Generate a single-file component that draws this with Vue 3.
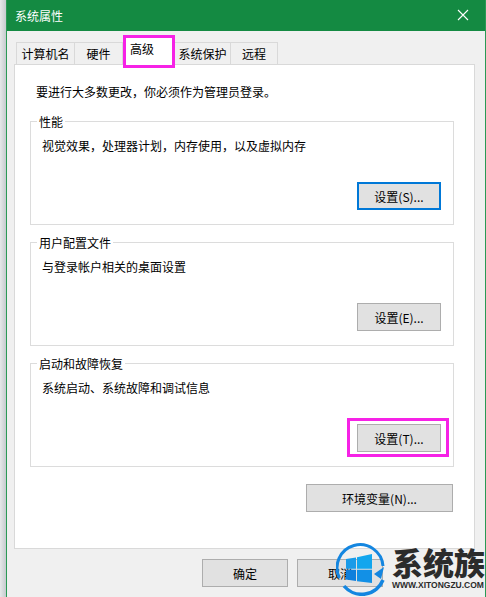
<template>
  <div class="desktop">
    <div class="shadow"></div>
    <div class="window">
      <div class="titlebar">
        <span>系统属性</span>
        <svg class="close" width="12" height="12" viewBox="0 0 12 12">
          <path d="M1 1 L11 11 M11 1 L1 11" stroke="#fff" stroke-width="1.1" fill="none" />
        </svg>
      </div>

      <div class="dialog">
        <div class="tabs">
          <div
            v-for="tab in tabs"
            :key="tab.name"
            class="tab"
            :class="{ active: tab.name === '高级' }"
            :style="{ width: tab.width + 'px' }"
          >
            {{ tab.name }}
          </div>
        </div>

        <div class="panel">
          <p class="notice">要进行大多数更改，你必须作为管理员登录。</p>

          <div v-for="group in groups" :key="group.title" class="group">
            <span class="legend">{{ group.title }}</span>
            <p class="desc">{{ group.desc }}</p>
            <div class="group-foot">
              <button class="btn" :class="{ focused: group.focused, marked: group.marked }">
                {{ group.button }}
                <span v-if="group.marked" class="mark"></span>
              </button>
            </div>
          </div>

          <div class="env-row">
            <button class="btn env">环境变量(N)...</button>
          </div>
        </div>

        <div class="footer">
          <button class="btn wide">确定</button>
          <button class="btn wide">取消</button>
        </div>
      </div>
    </div>

    <div class="watermark">
      <svg class="logo" width="52" height="54" viewBox="0 0 52 54">
        <path d="M3.5 36 A23 23 0 1 1 47 24" fill="none" stroke="#1486e0" stroke-width="3" />
        <path d="M47 38 A23 23 0 0 1 8 44" fill="none" stroke="#1486e0" stroke-width="3.5" />
        <path d="M38 32 L48 25 L45 37 Z" fill="#1486e0" />
        <path d="M10 17 L20 15.5 L20 26.8 L10 26.8 Z" fill="#1a9be8" />
        <path d="M21 15.2 L36 12 L36 26.8 L21 26.8 Z" fill="#12a6ee" />
        <path d="M10 27.8 L20 27.8 L20 39 L10 37.5 Z" fill="#0f7fdc" />
        <path d="M21 27.8 L36 27.8 L36 41 L21 39.2 Z" fill="#1290e6" />
      </svg>
      <div class="brand">
        <div class="brand-name">系统族</div>
        <div class="brand-url">WWW.XITONGZU.COM</div>
      </div>
    </div>
  </div>
</template>

<script setup>
const tabs = [
  { name: "计算机名", width: 59 },
  { name: "硬件", width: 48 },
  { name: "高级", width: 52 },
  { name: "系统保护", width: 56 },
  { name: "远程", width: 47 }
];

const groups = [
  {
    title: "性能",
    desc: "视觉效果，处理器计划，内存使用，以及虚拟内存",
    button: "设置(S)...",
    focused: true
  },
  {
    title: "用户配置文件",
    desc: "与登录帐户相关的桌面设置",
    button: "设置(E)..."
  },
  {
    title: "启动和故障恢复",
    desc: "系统启动、系统故障和调试信息",
    button: "设置(T)...",
    marked: true
  }
];
</script>

<style>
html,
body {
  margin: 0;
  overflow: hidden;
}
</style>

<style scoped>
.desktop {
  position: relative;
  display: flex;
  width: 486px;
  height: 597px;
  overflow: hidden;
  background: #fff;
  font-family: "Noto Sans CJK SC", "Liberation Sans", sans-serif;
  font-size: 12px;
  color: #000;
}
.shadow {
  width: 6px;
  background: linear-gradient(to right, #e6e8e9, #c5cbce);
}
.window {
  flex: 1;
  display: flex;
  flex-direction: column;
  border-left: 1px solid #2a9a55;
  border-right: 1px solid #2a9a55;
  background: #f0f0f0;
}
.titlebar {
  height: 31px;
  flex: none;
  display: flex;
  align-items: center;
  justify-content: space-between;
  padding: 0 16px 1px 8px;
  box-sizing: border-box;
  background: #148a42;
  color: #fff;
}
.close {
  display: block;
}
.dialog {
  flex: 1;
  padding: 4px 10px 0 7px;
  display: flex;
  flex-direction: column;
}
.tabs {
  display: flex;
  align-items: flex-end;
  height: 29px;
  padding-left: 2px;
}
.tab {
  position: relative;
  height: 22px;
  box-sizing: border-box;
  border: 1px solid #d9d9d9;
  border-bottom: none;
  border-left: none;
  background: #f0f0f0;
  text-align: center;
  line-height: 21px;
}
.tab:first-child {
  border-left: 1px solid #d9d9d9;
}
.tab.active {
  z-index: 2;
  height: 33px;
  margin-bottom: -4px;
  border: 3px solid #f622e6;
  background: #fff;
  line-height: 22px;
  text-align: left;
  padding-left: 4px;
}
.panel {
  height: 485px;
  box-sizing: border-box;
  border: 1px solid #d9d9d9;
  background: #fff;
  padding: 18px 20px 0 15px;
}
.notice {
  margin: 0 0 20px 6px;
  height: 18px;
  line-height: 18px;
}
.group {
  position: relative;
  height: 104px;
  box-sizing: border-box;
  border: 1px solid #dcdcdc;
  margin-bottom: 17px;
  padding: 15px 12px 0 11px;
}
.legend {
  position: absolute;
  top: -9px;
  left: 6px;
  padding: 0 2px;
  background: #fff;
  line-height: 18px;
}
.desc {
  margin: 0;
  height: 18px;
  line-height: 18px;
}
.group-foot {
  display: flex;
  justify-content: flex-end;
  margin-top: 27px;
}
.btn {
  position: relative;
  width: 84px;
  height: 28px;
  padding: 0;
  box-sizing: border-box;
  border: 1px solid #adadad;
  border-radius: 0;
  background: #e1e1e1;
  color: #000;
  font: inherit;
  cursor: pointer;
}
.btn.focused {
  border: 2px solid #0078d7;
}
.mark {
  position: absolute;
  top: -7px;
  right: -9px;
  bottom: -6px;
  left: -11px;
  border: 3px solid #f622e6;
  pointer-events: none;
}
.env-row {
  display: flex;
  justify-content: flex-end;
  padding-right: 1px;
}
.env {
  width: 147px;
}
.footer {
  display: flex;
  gap: 9px;
  padding: 10px 0 0 188px;
}
.wide {
  width: 86px;
}
.watermark {
  position: absolute;
  left: 336px;
  top: 542px;
  width: 150px;
  display: flex;
  gap: 4px;
  white-space: nowrap;
}
.logo {
  display: block;
  flex: none;
}
.brand {
  padding-top: 2px;
}
.brand-name {
  font-size: 31px;
  font-weight: 900;
  line-height: 36px;
  color: #2b2b2b;
}
.brand-url {
  margin-top: 1px;
  font-family: "Liberation Sans", sans-serif;
  font-size: 8.5px;
  font-weight: 700;
  line-height: 9px;
  color: #2b2b2b;
}
</style>
